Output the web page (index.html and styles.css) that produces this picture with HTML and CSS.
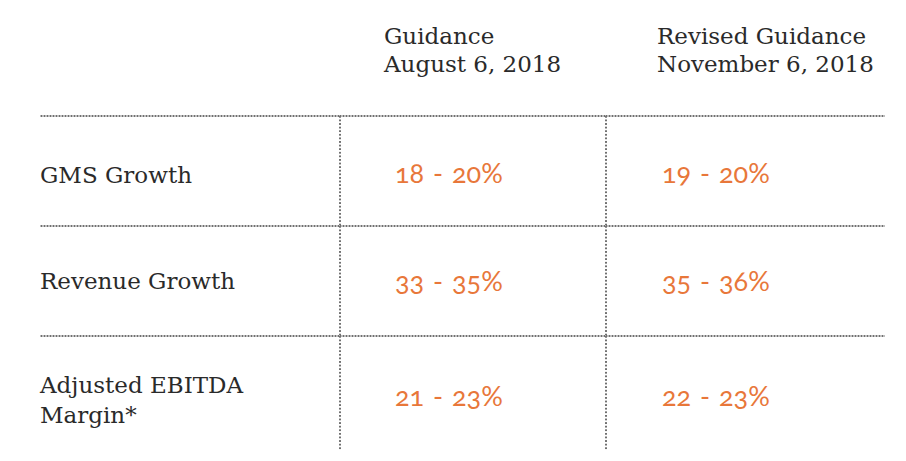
FILE: index.html
```html
<!DOCTYPE html>
<html lang="en">
<head>
<meta charset="utf-8">
<title>Guidance</title>
<link rel="stylesheet" href="styles.css">
</head>
<body>
<div class="table">
  <div class="cell head"></div>
  <div class="cell head c2">Guidance<br>August 6, 2018</div>
  <div class="cell head c3">Revised Guidance<br>November 6, 2018</div>

  <div class="cell label r1">GMS Growth</div>
  <div class="cell num c2 r1">18 - 20%</div>
  <div class="cell num c3 r1">19 - 20%</div>

  <div class="cell label r2">Revenue Growth</div>
  <div class="cell num c2 r2">33 - 35%</div>
  <div class="cell num c3 r2">35 - 36%</div>

  <div class="cell label r3">Adjusted EBITDA<br>Margin*</div>
  <div class="cell num c2 r3">21 - 23%</div>
  <div class="cell num c3 r3">22 - 23%</div>
</div>
</body>
</html>
```

FILE: styles.css
```css
html, body {
  margin: 0;
  padding: 0;
  background: #ffffff;
}

body {
  width: 906px;
  height: 461px;
  overflow: hidden;
}

.table {
  display: grid;
  grid-template-columns: 299px 266px 280px;
  grid-template-rows: 115px 110px 110px 115px;
  margin-left: 40px;
  font-family: "DejaVu Serif", "Liberation Serif", serif;
  font-size: 23px;
  color: #2a2a2a;
}

.cell {
  box-sizing: border-box;
  display: flex;
  align-items: center;
}

.head {
  display: block;
  padding-top: 22px;
  line-height: 28px;
}

.head.c2 { padding-left: 45px; }
.head.c3 { padding-left: 52px; }

/* dotted rules drawn as small round dots */
.label, .num {
  border-top: 2px solid transparent;
  background-image: radial-gradient(circle, #707070 0.9px, transparent 1.3px);
  background-size: 3px 2px;
  background-repeat: repeat-x;
  background-position: 0 0;
  background-origin: border-box;
}

.c2.num, .c3.num {
  border-left: 2px solid transparent;
  background-image:
    radial-gradient(circle, #707070 0.9px, transparent 1.3px),
    radial-gradient(circle, #707070 0.9px, transparent 1.3px);
  background-size: 3px 2px, 2px 3.6px;
  background-repeat: repeat-x, repeat-y;
  background-position: 0 0, 0 0;
  background-origin: border-box, border-box;
}

.label {
  line-height: 30px;
}

.num {
  font-family: "Lato", "Open Sans", sans-serif;
  font-variant-numeric: oldstyle-nums;
  font-feature-settings: "onum" 1;
  font-size: 27px;
  line-height: 28px;
  word-spacing: 2px;
  color: #e8773a;
}

.c2.num { padding-left: 54px; }
.c3.num { padding-left: 55px; }

.r1 { padding-top: 7px; }
.num.r1 { padding-top: 3px; }
.r2 { padding-top: 0; }
.r3 { padding-top: 12px; }
.num.r3 { padding-top: 4px; }
```
